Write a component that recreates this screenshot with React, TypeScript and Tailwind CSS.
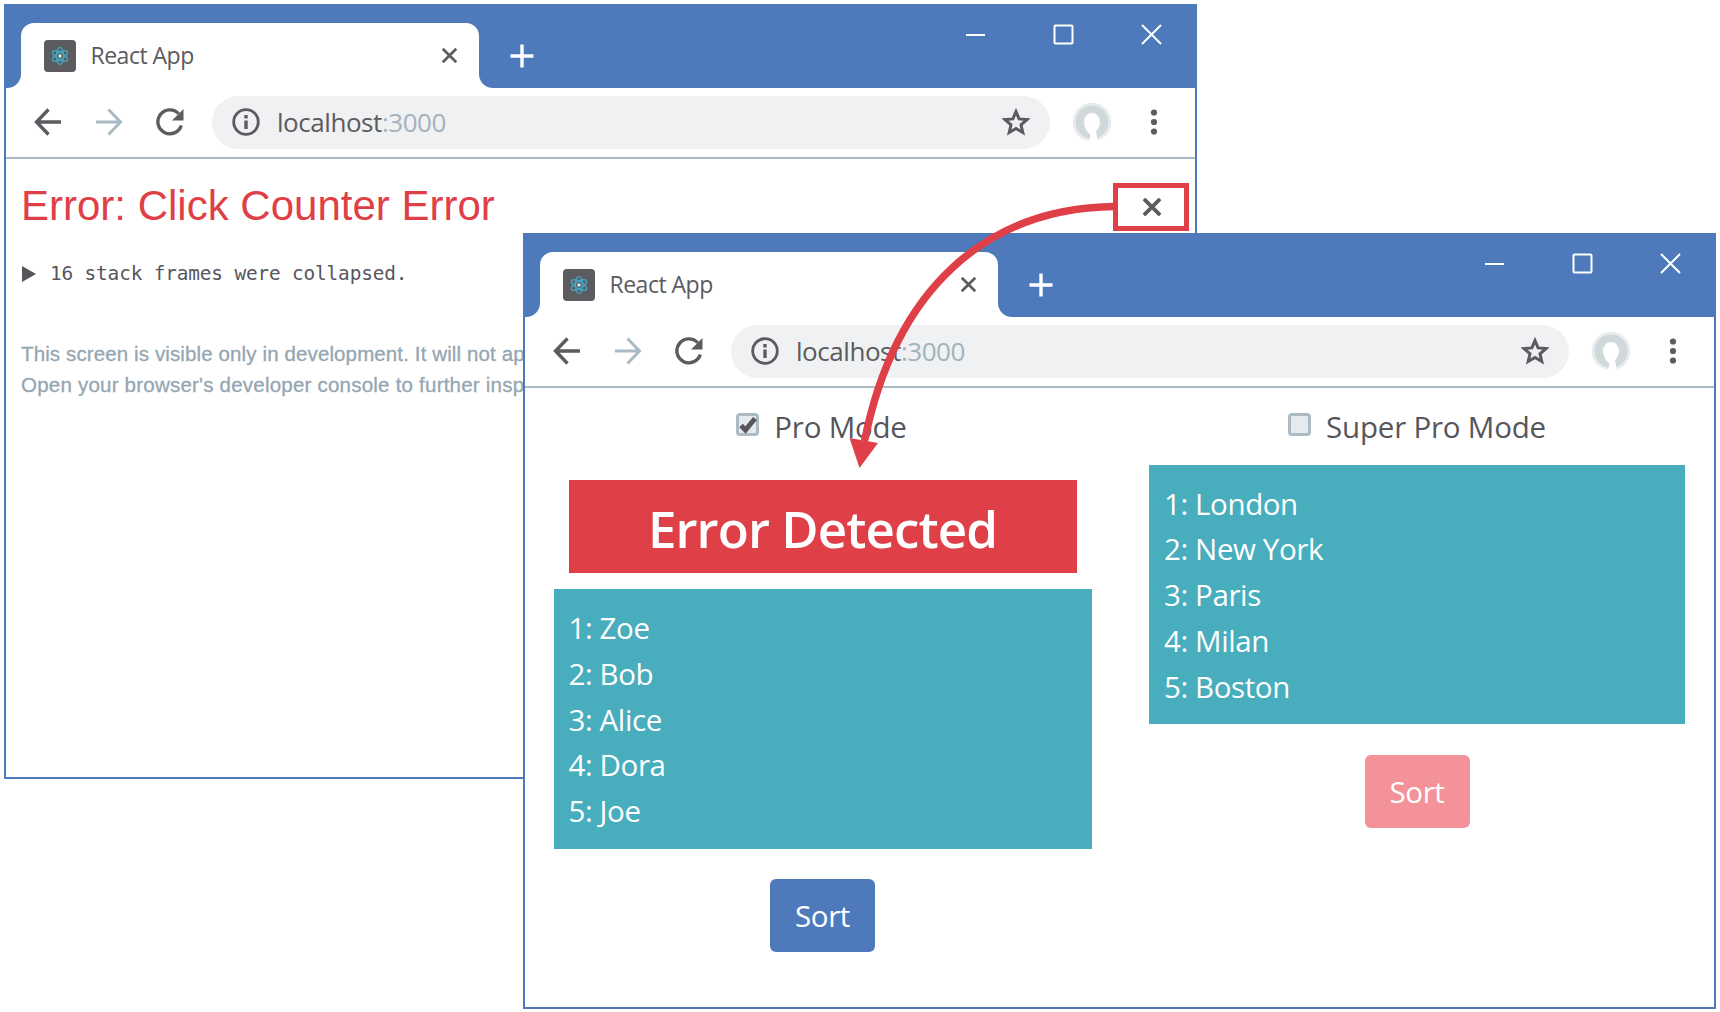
import type { ReactNode } from "react";

function Cross({ size, width, className }: { size: number; width: number; className?: string }) {
  return (
    <svg width={size} height={size} viewBox="0 0 20 20" className={className} fill="none" stroke="currentColor" strokeWidth={width}>
      <path d="M1 1 19 19M19 1 1 19" />
    </svg>
  );
}

function Favicon() {
  return (
    <svg width="32" height="32" viewBox="0 0 32 32" fill="none">
      <rect width="32" height="32" rx="4" fill="#5b5b60" />
      <g stroke="#45a5c0" strokeWidth="1.4">
        <ellipse cx="16" cy="16" rx="3.600" ry="8.600" />
        <ellipse cx="16" cy="16" rx="3.600" ry="8.600" transform="rotate(60 16 16)" />
        <ellipse cx="16" cy="16" rx="3.600" ry="8.600" transform="rotate(120 16 16)" />
      </g>
      <circle cx="16" cy="16" r="1.7" fill="#d5edf2" />
    </svg>
  );
}

function TitleBar() {
  return (
    <div className="flex h-[84px] shrink-0 bg-[#4e7abc]">
      <div className="w-[15px] bg-white">
        <div className="h-full rounded-br-[14px] bg-[#4e7abc]" />
      </div>
      <div className="w-[458px] pt-[19px]">
        <div className="flex h-full items-center rounded-t-[13px] bg-white pl-[22.500px] text-[#5b5b60]">
          <Favicon />
          <span className="mb-[2px] ml-[15px] flex-1 text-[23px] leading-[30px] tracking-[-0.500px]">React App</span>
          <Cross size={15} width={3.6} className="mr-[22.500px]" />
        </div>
      </div>
      <div className="flex-1 bg-white">
        <div className="flex h-full rounded-bl-[14px] bg-[#4e7abc] text-white">
          <svg width="24" height="24" viewBox="0 0 24 24" className="mt-[39.500px] ml-[30.500px]" stroke="currentColor" strokeWidth="3.4">
            <path d="M12 .5v23M.5 12h23" />
          </svg>
          <div className="mt-[20px] mr-[33px] ml-auto flex h-[21px] gap-[67px]">
            <svg width="21" height="21" stroke="currentColor" strokeWidth="2">
              <path d="M1 11h19" />
            </svg>
            <svg width="21" height="21" fill="none" stroke="currentColor" strokeWidth="2">
              <rect x="1.5" y="1.5" width="18" height="18" rx="1" />
            </svg>
            <svg width="21" height="21" stroke="currentColor" strokeWidth="2">
              <path d="M1 1 20 20M20 1 1 20" />
            </svg>
          </div>
        </div>
      </div>
    </div>
  );
}

function ToolBar() {
  return (
    <div className="flex h-[70.500px] shrink-0 items-center border-b-2 border-[#a9bac4] text-[#5b5b60]">
      <svg width="28" height="28" viewBox="0 0 28 28" className="ml-[28px]" fill="none" stroke="currentColor" strokeWidth="3.400">
        <path d="M14.500 1.500 2.500 14l12 12.500M2.500 14H27" />
      </svg>
      <svg width="28" height="28" viewBox="0 0 28 28" className="ml-[33px] text-[#a9bac4]" fill="none" stroke="currentColor" strokeWidth="3">
        <path d="M13.500 1.500 25.500 14l-12 12.500M25.500 14H1" />
      </svg>
      <svg width="28" height="28" viewBox="0 0 28 28" className="ml-[33px]" fill="none">
        <path d="M25.300 17.500A12 12 0 1 1 22.600 5.600" stroke="currentColor" strokeWidth="3.400" />
        <path d="M27.500 1v11.500H16z" fill="currentColor" />
      </svg>
      <div className="ml-[28px] flex h-[53px] w-[838px] items-center rounded-full bg-[#f0f1f2] pr-[20.500px] pl-[20px]">
        <svg width="28" height="28" viewBox="0 0 28 28" fill="none">
          <circle cx="14" cy="14" r="12.300" stroke="currentColor" strokeWidth="2.800" />
          <path d="M14 12.500V21M14 7v3.400" stroke="currentColor" strokeWidth="3.400" />
        </svg>
        <span className="ml-[17px] flex-1 text-[26px] leading-[34px] tracking-[-0.450px]">
          localhost<span className="text-[#a3b2bc]">:3000</span>
        </span>
        <svg width="28" height="28" viewBox="0 0 28 28" fill="none" stroke="currentColor" strokeWidth="3">
          <path d="m14 3.600 3.100 7.300 7.900.7-6 5.200 1.800 7.700L14 20.400l-6.800 4.100L9 16.800l-6-5.200 7.900-.7z" />
        </svg>
      </div>
      <svg width="40" height="40" viewBox="0 0 40 40" className="ml-[21.500px]" fill="none">
        <circle cx="20" cy="20" r="19.300" fill="#e9eced" />
        <circle cx="20" cy="20" r="12.500" stroke="#d0d8dc" strokeWidth="8" />
        <path d="M20 11c5 0 7.500 4 7.500 9 0 4-1 7-3.500 9.500L26 40H17l1.500-7.500C14.500 30 12.500 25 12.500 20c0-5 2.500-9 7.500-9z" fill="#fff" />
      </svg>
      <svg width="8" height="28" viewBox="0 0 8 28" className="ml-[38px]" fill="currentColor">
        <circle cx="4" cy="4.500" r="3.100" />
        <circle cx="4" cy="14" r="3.100" />
        <circle cx="4" cy="23.500" r="3.100" />
      </svg>
    </div>
  );
}

function Browser({ className, children }: { className: string; children: ReactNode }) {
  return (
    <section className={`absolute flex w-[1193px] flex-col overflow-hidden border-x-2 border-b-2 border-[#4e7abc] bg-white ${className}`}>
      <TitleBar />
      <ToolBar />
      {children}
    </section>
  );
}

function ModeToggle({ checked, label }: { checked?: boolean; label: string }) {
  return (
    <div className="flex h-[46px] items-center justify-center text-[29.500px] leading-[46px] tracking-[-0.200px] text-[#56565c]">
      <span className="mr-[15px] mb-[5px] flex size-[23px] items-center justify-center rounded-[4px] border-[3px] border-[#abbac3] bg-[#e6eaec]">
        {checked && (
          <svg width="18" height="18" viewBox="0 0 18 18" className="shrink-0" fill="none" stroke="#56565c" strokeWidth="5">
            <path d="m2 9.500 4.500 4.500L16 2.500" />
          </svg>
        )}
      </span>
      {label}
    </div>
  );
}

function List({ items }: { items: string[] }) {
  return (
    <ol className="h-[259.500px] bg-[#48adbd] px-[15px] pt-[16px] text-[29.500px] leading-[45.800px] tracking-[-0.400px] text-white">
      {items.map((item, i) => (
        <li key={item}>
          {i + 1}: {item}
        </li>
      ))}
    </ol>
  );
}

export default function App() {
  return (
    <main className="relative h-[1012px] w-[1720px] overflow-hidden bg-white font-['Open_Sans',sans-serif]">
      <Browser className="top-[4px] left-[4px] h-[775px]">
        <div className="flex items-start justify-between pt-[24.500px] pr-[6px] pl-[15px]">
          <div className="w-[510px] whitespace-nowrap">
            <h1 className="mt-[-1px] font-['Liberation_Sans',sans-serif] text-[42px] leading-[48px] text-[#df4048]">Error: Click Counter Error</h1>
            <div className="mt-[29px] flex h-[30px] items-center font-['DejaVu_Sans_Mono',monospace] text-[19.400px] leading-[30px] tracking-[-0.150px] text-[#56565c]">
              <svg width="15" height="16" className="mr-[14px]" fill="currentColor">
                <path d="M1 0 15 8 1 16z" />
              </svg>
              16 stack frames were collapsed.
            </div>
            <div className="mt-[50px] font-['Liberation_Sans',sans-serif] text-[20.500px] leading-[30.600px] text-[#94a6b1] [-webkit-text-stroke:0.3px_#94a6b1]">
              <p className="tracking-[0.120px]">This screen is visible only in development. It will not ap</p>
              <p className="tracking-[0.220px]">Open your browser's developer console to further insp</p>
            </div>
          </div>
          <button className="flex h-[48px] w-[76px] shrink-0 items-center justify-center border-[5px] border-[#df4048] text-[#5b5b60]">
            <Cross size={18} width={4.2} className="ml-[2px]" />
          </button>
        </div>
      </Browser>

      <Browser className="top-[233px] left-[523px] h-[775.500px]">
        <div className="grid grid-cols-2 pt-[16.500px]">
          <div className="pr-[28px] pl-[28.500px]">
            <div className="mr-[2px]">
              <ModeToggle checked label="Pro Mode" />
            </div>
            <h2 className="mx-[15px] mt-[29.500px] flex h-[93.500px] items-center justify-center bg-[#df4048] pt-[4px] text-[51px] font-semibold tracking-[-0.900px] text-white">
              Error Detected
            </h2>
            <div className="mt-[16px]">
              <List items={["Zoe", "Bob", "Alice", "Dora", "Joe"]} />
            </div>
            <button className="mx-auto mt-[30.500px] block h-[73px] w-[105px] rounded-[6px] bg-[#4e7abc] pt-[2px] text-[29.500px] tracking-[-0.400px] text-white">Sort</button>
          </div>
          <div className="pr-[29px] pl-[29.500px]">
            <ModeToggle label="Super Pro Mode" />
            <div className="mt-[14.500px]">
              <List items={["London", "New York", "Paris", "Milan", "Boston"]} />
            </div>
            <button className="mx-auto mt-[30.500px] block h-[73px] w-[105px] rounded-[6px] bg-[#f39299] pt-[2px] text-[29.500px] tracking-[-0.400px] text-white">Sort</button>
          </div>
        </div>
      </Browser>

      <svg className="pointer-events-none absolute top-[180px] left-[840px]" width="280" height="292" viewBox="840 180 280 292" fill="none">
        <path d="M1115 206.500C985 208 895 290 864.500 441" stroke="#df4048" strokeWidth="7.500" />
        <path d="M849.500 438 878 443 859.500 468z" fill="#df4048" />
      </svg>
    </main>
  );
}
